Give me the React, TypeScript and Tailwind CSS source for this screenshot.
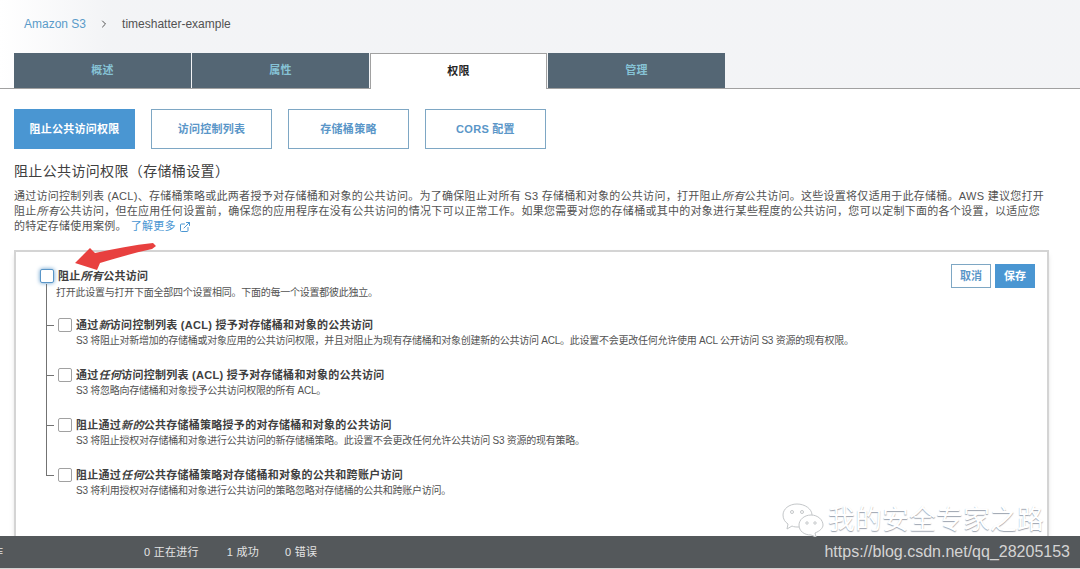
import { ChevronRight, ExternalLink } from 'lucide-react'

const tabs = ['概述', '属性', '权限', '管理']
const subTabs = ['阻止公共访问权限', '访问控制列表', '存储桶策略', 'CORS 配置']

const options = [
  {
    before: '通过',
    em: '新',
    after: '访问控制列表 (ACL) 授予对存储桶和对象的公共访问',
    desc: 'S3 将阻止对新增加的存储桶或对象应用的公共访问权限，并且对阻止为现有存储桶和对象创建新的公共访问 ACL。此设置不会更改任何允许使用 ACL 公开访问 S3 资源的现有权限。',
  },
  {
    before: '通过',
    em: '任何',
    after: '访问控制列表 (ACL) 授予对存储桶和对象的公共访问',
    desc: 'S3 将忽略向存储桶和对象授予公共访问权限的所有 ACL。',
  },
  {
    before: '阻止通过',
    em: '新的',
    after: '公共存储桶策略授予的对存储桶和对象的公共访问',
    desc: 'S3 将阻止授权对存储桶和对象进行公共访问的新存储桶策略。此设置不会更改任何允许公共访问 S3 资源的现有策略。',
  },
  {
    before: '阻止通过',
    em: '任何',
    after: '公共存储桶策略对存储桶和对象的公共和跨账户访问',
    desc: 'S3 将利用授权对存储桶和对象进行公共访问的策略忽略对存储桶的公共和跨账户访问。',
  },
]

function RedArrow() {
  return (
    <svg className="absolute left-16 top-60 w-24 h-10" viewBox="0 0 96 40">
      <path d="M11 23 L26 8 L31 13 C50 9 70 5 89 3 L92 6 L88 9 C70 13 52 18 36 23 L33 30 Z" fill="#e8403f" />
    </svg>
  )
}

function Watermark() {
  return (
    <div className="absolute right-9 top-[500px] h-10 flex items-center gap-1 text-[27px] text-white [text-shadow:0_1px_1px_#9ca3af]">
      <svg className="w-10.5 h-[34px]" viewBox="0 0 42 34" fill="white" stroke="#c4c7c9" strokeWidth="1">
        <path d="M15 1 C7 1 1 6 1 12 C1 16 3 19 6 21 L5 26 L10 23 C12 24 14 24 17 24 C24 24 30 19 30 12 C30 6 23 1 15 1 Z" />
        <path d="M29 12 C22 12 17 17 17 22 C17 28 22 32 29 32 L34 34 L33 30 C38 28 41 25 41 22 C41 17 36 12 29 12 Z" />
        <circle cx="10" cy="9" r="1.5" fill="none" />
        <circle cx="20" cy="9" r="1.5" fill="none" />
        <circle cx="25" cy="20" r="1.2" fill="none" />
        <circle cx="33" cy="20" r="1.2" fill="none" />
      </svg>
      <span>我的安全专家之路</span>
    </div>
  )
}

export default function App() {
  return (
    <div
      className="relative h-screen flex flex-col overflow-hidden bg-white text-neutral-700"
      style={{ fontFamily: '"Liberation Sans", "Noto Sans CJK SC", sans-serif' }}
    >
      {/* breadcrumb + tabs */}
      <div className="bg-gradient-to-r from-white to-gray-100 to-10% border-b border-neutral-400 h-[89px] shrink-0">
        <div className="h-[53px] pl-6 pt-4 flex items-start text-xs leading-4">
          <span className="text-[#5a9bc9]">Amazon S3</span>
          <ChevronRight className="mx-3 mt-0.5 w-3 h-3 text-neutral-600" />
          <span className="text-neutral-600">timeshatter-example</span>
        </div>
        <div className="grid grid-cols-4 gap-px ml-3.5 w-[711px]">
          {tabs.map((tab) =>
            tab === '权限' ? (
              <div
                key={tab}
                className="h-9 flex items-center justify-center bg-white border border-b-0 border-neutral-400 text-[11px] tracking-wide font-bold text-neutral-800"
              >
                {tab}
              </div>
            ) : (
              <div
                key={tab}
                className="h-[35px] flex items-center justify-center bg-[#546674] text-[11px] tracking-wide font-bold text-[#86c3d6]"
              >
                {tab}
              </div>
            )
          )}
        </div>
      </div>

      <div className="flex-1 min-h-0 flex flex-col px-3.5">
        <div className="grid grid-cols-4 gap-4 mt-5 w-[532px]">
          {subTabs.map((tab, i) => (
            <div
              key={tab}
              className={
                i === 0
                  ? 'h-10 flex items-center justify-center bg-[#4a96d2] text-[11px] tracking-wide font-bold text-white'
                  : 'h-10 flex items-center justify-center bg-white border border-[#7ea7c4] text-[11px] tracking-wide font-bold text-[#5a96c8]'
              }
            >
              {tab}
            </div>
          ))}
        </div>

        <h2 className="mt-2.5 text-sm tracking-wide leading-6 text-neutral-700">阻止公共访问权限（存储桶设置）</h2>

        <p className="mt-1.5 text-[11px] tracking-wide leading-[15px] w-[1032px] text-neutral-600">
          通过访问控制列表 (ACL)、存储桶策略或此两者授予对存储桶和对象的公共访问。为了确保阻止对所有 S3 存储桶和对象的公共访问，打开阻止<em>所有</em>公共访问。这些设置将仅适用于此存储桶。AWS 建议您打开阻止<em>所有</em>公共访问，但在应用任何设置前，确保您的应用程序在没有公共访问的情况下可以正常工作。如果您需要对您的存储桶或其中的对象进行某些程度的公共访问，您可以定制下面的各个设置，以适应您的特定存储使用案例。
          <span className="ml-1 text-[#4a96d2]">
            了解更多 <ExternalLink className="inline w-3 h-3" />
          </span>
        </p>

        {/* settings panel, runs under the status bar */}
        <div className="mt-4 w-[1035px] flex-1 min-h-0 flex justify-between border-2 border-b-0 border-neutral-300 shadow-md">
          <div className="pl-6 pt-4">
            <div className="flex items-center gap-1 h-4">
              <div className="w-3.5 h-3.5 rounded-xs border border-[#5a96c8] bg-white shadow-[0_0_4px_#5a96c8]" />
              <span className="text-[11px] tracking-wide font-semibold text-neutral-700">
                阻止<em>所有</em>公共访问
              </span>
            </div>
            <div className="relative pt-px">
              <div className="absolute left-1.5 top-0 bottom-6 w-px bg-neutral-500" />
              <p className="pl-4 h-4 text-[10px] tracking-tight leading-4 text-neutral-600">打开此设置与打开下面全部四个设置相同。下面的每一个设置都彼此独立。</p>
              <div className="mt-4">
                {options.map((o) => (
                  <div key={o.after} className="pb-4.5 last:pb-0">
                    <div className="flex items-center gap-1 h-4 pl-1.5">
                      <div className="w-2 h-px bg-neutral-500" />
                      <div className="w-3.5 h-3.5 rounded-xs border border-neutral-400 bg-white" />
                      <span className="text-[11px] tracking-wide font-semibold text-neutral-700">
                        {o.before}
                        <em>{o.em}</em>
                        {o.after}
                      </span>
                    </div>
                    <p className="pl-9 h-4 text-[10px] tracking-tight leading-4 text-neutral-600">{o.desc}</p>
                  </div>
                ))}
              </div>
            </div>
          </div>
          <div className="flex gap-1 items-start pt-3 pr-3">
            <div className="w-10 h-6 flex items-center justify-center border border-[#7ea7c4] bg-white text-[11px] font-bold text-[#5a96c8]">取消</div>
            <div className="w-10 h-6 flex items-center justify-center bg-[#4a96d2] text-[11px] font-bold text-white">保存</div>
          </div>
        </div>
      </div>

      {/* status bar */}
      <div className="h-[33px] shrink-0 flex items-center justify-between bg-[#54585b] border-b border-neutral-300 text-[11px] tracking-wide text-neutral-200">
        <div className="flex">
          <span className="-ml-2 w-3">作</span>
          <span className="ml-35">0 正在进行</span>
          <span className="ml-7">1 成功</span>
          <span className="ml-6.5">0 错误</span>
        </div>
        <span className="pr-2.5 text-base tracking-normal text-neutral-300">https://blog.csdn.net/qq_28205153</span>
      </div>

      <RedArrow />
      <Watermark />
    </div>
  )
}
